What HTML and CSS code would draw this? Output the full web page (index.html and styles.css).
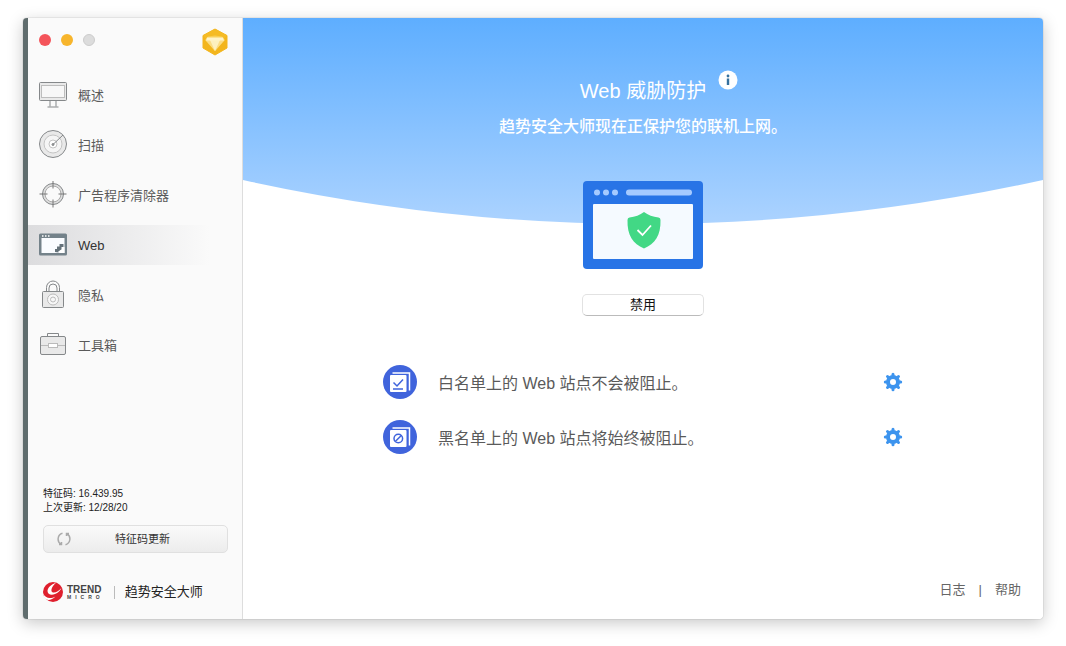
FILE: index.html
```html
<!DOCTYPE html>
<html lang="zh-CN">
<head>
<meta charset="utf-8">
<title>趋势安全大师</title>
<link rel="stylesheet" href="styles.css">
</head>
<body>
<div class="window">
  <aside class="sidebar">
    <header class="titlebar">
      <div class="lights">
        <button class="light light-close" aria-label="关闭"></button>
        <button class="light light-min" aria-label="最小化"></button>
        <button class="light light-zoom" aria-label="缩放" disabled></button>
      </div>
      <svg class="gem" viewBox="0 0 26 28" aria-hidden="true">
        <path d="M13 1 25 7.500V20L13 27 1 20V7.500Z" fill="#f3b51c" stroke="#f3b51c" stroke-linejoin="round"/>
        <path d="M13 1 25 7.500 22 11 13 8 4 11 1 7.500Z" fill="#f5bb25"/>
        <path d="M6 8.500 13 7.500l7 1L23 12 13 23 3 12Z" fill="#f9cf55"/>
        <path d="M3.500 12h19L13 23Z" fill="#fbdd85"/>
        <path d="M8 12h10l-5 11Z" fill="#fdf0bf"/>
        <path d="M4 12.500h18l-1-3H5Z" fill="#fff3c8"/>
      </svg>
    </header>

    <nav class="menu">
      <a class="item" href="#overview">
        <svg class="icon" viewBox="0 0 28 28" fill="none" stroke="#85888a" aria-hidden="true">
          <rect x=".5" y="1.500" width="27" height="18" rx="1" fill="#e9e9e9"/>
          <rect x="2.500" y="4.500" width="23" height="12" fill="#f7f7f7" stroke="#bdbdbd"/>
          <path d="M11 20v5.500M17 20v5.500M8.500 26h11"/>
        </svg>
        <span>概述</span>
      </a>
      <a class="item" href="#scan">
        <svg class="icon" viewBox="0 0 28 28" fill="none" stroke="#85888a" aria-hidden="true">
          <circle cx="14" cy="13" r="13.500" fill="#e9e9e9"/>
          <circle cx="14" cy="13" r="9" fill="#f5f5f5" stroke="#c4c4c4"/>
          <circle cx="14" cy="13" r="4" fill="#fff" stroke="#c4c4c4"/>
          <circle cx="14" cy="13.500" r="1" fill="#999"/>
          <path d="M14 13.500 24 4"/>
        </svg>
        <span>扫描</span>
      </a>
      <a class="item" href="#adware">
        <svg class="icon" viewBox="0 0 28 28" fill="none" stroke="#85888a" aria-hidden="true">
          <circle cx="14" cy="13" r="10.500" fill="#dedede"/>
          <circle cx="14" cy="13" r="8" fill="#fafafa" stroke="#aaa"/>
          <path d="M14 0v7.500M14 18.500v8M.5 13h8M19.500 13h8" stroke="#777"/>
        </svg>
        <span>广告程序清除器</span>
      </a>
      <a class="item item-active" href="#web" aria-current="page">
        <svg class="icon" viewBox="0 0 28 28" fill="none" aria-hidden="true">
          <rect x="0" y="2.500" width="28" height="22" rx="1.500" fill="#74828a"/>
          <rect x="2.500" y="7" width="23" height="15" fill="#fafcff"/>
          <path d="M3 5h1.500M6 5h1.500M9 5h1.500" stroke="#fff" stroke-width="1.500"/>
          <path d="M16 21v-3h2v-2.500h2.500V13h4v4l-3 3h-2v1.500Z" fill="#65727a"/>
          <path d="M20.500 22v-2.500l2-1V16h3v6Z" fill="#fff"/>
        </svg>
        <span>Web</span>
      </a>
      <a class="item" href="#privacy">
        <svg class="icon" viewBox="0 0 28 28" fill="none" stroke="#85888a" aria-hidden="true">
          <path d="M7.500 10V6.500a6.500 6.500 0 0 1 13 0V10M10 10V7a4 4 0 0 1 8 0v3"/>
          <rect x="3.500" y="10.500" width="21" height="16" rx="1" fill="#e9e9e9"/>
          <circle cx="14" cy="18.500" r="5.500" stroke="#bbb" fill="#f7f7f7"/>
          <circle cx="14" cy="18.500" r="2.500" stroke="#bbb"/>
        </svg>
        <span>隐私</span>
      </a>
      <a class="item" href="#toolbox">
        <svg class="icon" viewBox="0 0 28 28" fill="none" stroke="#85888a" aria-hidden="true">
          <path d="M8.500 5.500v-3h11v3"/>
          <rect x="1.500" y="5.500" width="25" height="18" rx="1.500" fill="#e9e9e9"/>
          <path d="M2 14.500h24" stroke="#bbb"/>
          <rect x="9.500" y="12.500" width="9" height="4" fill="#fff" stroke="#bbb"/>
        </svg>
        <span>工具箱</span>
      </a>
    </nav>

    <div class="status">
      <p>特征码: 16.439.95</p>
      <p>上次更新: 12/28/20</p>
    </div>
    <button class="update">
      <svg class="refresh" viewBox="0 0 14 14" fill="none" stroke="#aaa" stroke-width="1.500" aria-hidden="true">
        <path d="M5.500 1.300A6 6 0 0 0 4 12.200M8.500 12.700A6 6 0 0 0 10 1.800M2 12.500h2.500V10M12 1.500H9.500V4"/>
      </svg>
      <span>特征码更新</span>
    </button>

    <footer class="brand">
      <svg class="ball" viewBox="0 0 20 20" aria-hidden="true">
        <circle cx="10" cy="10" r="10" fill="#df1f2d"/>
        <path d="M13 .8C8 2.500 4.800 5.500 4.500 9c0 3.300 3.500 4.500 7.500 3 3-1.200 5.500-3.500 6.500-6-2.500 3-6 5-8.500 4.500C7 9.800 8.500 4.500 13 .8Z" fill="#fff"/>
        <path d="M.3 11.500c1.700 4.500 6.700 6 12.200 3-3.500 3.500-8 4.500-10.500 2C1 15 .4 13.500.3 11.500Z" fill="#fff"/>
      </svg>
      <div class="wordmark"><b>TREND</b><small>MICRO</small></div>
      <i class="rule"></i>
      <span class="product">趋势安全大师</span>
    </footer>
  </aside>

  <main class="main">
    <svg class="backdrop" viewBox="0 0 800 206" preserveAspectRatio="none" aria-hidden="true">
      <defs>
        <linearGradient id="sky" x1="0" y1="0" x2="0" y2="1">
          <stop offset="0" stop-color="#5eaeff"/>
          <stop offset="1" stop-color="#acd3ff"/>
        </linearGradient>
      </defs>
      <path d="M0 0H800V162Q400 250 0 162Z" fill="url(#sky)"/>
    </svg>

    <section class="hero">
      <h1 class="title">Web 威胁防护
        <button class="info" aria-label="信息">
          <svg viewBox="0 0 20 20" aria-hidden="true">
            <circle cx="10" cy="10" r="9.500" fill="#fff"/>
            <circle cx="10" cy="6" r="1.400" fill="#35719f"/>
            <rect x="8.800" y="8.500" width="2.400" height="6.500" fill="#35719f"/>
          </svg>
        </button>
      </h1>
      <p class="lead">趋势安全大师现在正保护您的联机上网。</p>
      <svg class="browser" viewBox="0 0 120 88" aria-hidden="true">
        <rect width="120" height="88" rx="4" fill="#2874e6"/>
        <g fill="#a5caff">
          <circle cx="14" cy="11.500" r="3"/><circle cx="23" cy="11.500" r="3"/><circle cx="32" cy="11.500" r="3"/>
          <rect x="43" y="8.500" width="66" height="6" rx="3"/>
        </g>
        <rect x="10" y="23" width="100" height="55" rx="1" fill="#f5faff"/>
        <path d="M61 31c4 3 9 5 14.500 5.500Q77.500 36.700 77.500 39C78 54 72 63 61 67.500 50 63 44 54 44.500 39q0-2.300 2-2.500C52 36 57 34 61 31Z" fill="#42d885"/>
        <path d="m54.500 49 5 5L68 44.500" fill="none" stroke="#fff" stroke-width="1.800"/>
      </svg>
      <button class="toggle">禁用</button>
    </section>

    <ul class="lists">
      <li class="row">
        <svg class="badge" viewBox="0 0 34 34" fill="none" aria-hidden="true">
          <circle cx="17" cy="17" r="17" fill="#4064dc"/>
          <path d="M9.500 8H26.500V25.500" stroke="#fff" stroke-width="1.500"/>
          <rect x="7" y="10" width="16.500" height="17" rx="1" fill="#fff"/>
          <path d="m10.500 17.500 3.500 3.500 6-6.500M10 24h10" stroke="#4064dc" stroke-width="1.500"/>
        </svg>
        <span class="text">白名单上的 Web 站点不会被阻止。</span>
        <button class="gear" aria-label="白名单设置">
          <svg viewBox="0 0 20 20" fill="none" stroke="#3d94ee" stroke-linecap="round" aria-hidden="true">
            <circle cx="10" cy="10" r="5" stroke-width="4"/>
            <path d="M10 2.300v2M10 15.700v2M2.300 10h2M15.700 10h2M4.500 4.500l1.300 1.300M14.200 14.200l1.300 1.300M4.500 15.500l1.300-1.300M14.200 5.800l1.300-1.300" stroke-width="3"/>
          </svg>
        </button>
      </li>
      <li class="row">
        <svg class="badge" viewBox="0 0 34 34" fill="none" aria-hidden="true">
          <circle cx="17" cy="17" r="17" fill="#4064dc"/>
          <path d="M9.500 8H26.500V25.500" stroke="#fff" stroke-width="1.500"/>
          <rect x="7" y="10" width="16.500" height="17" rx="1" fill="#fff"/>
          <circle cx="15.300" cy="18.500" r="4.300" stroke="#4064dc" stroke-width="1.500"/>
          <path d="m12.300 21.500 6-6" stroke="#4064dc" stroke-width="1.500"/>
        </svg>
        <span class="text">黑名单上的 Web 站点将始终被阻止。</span>
        <button class="gear" aria-label="黑名单设置">
          <svg viewBox="0 0 20 20" fill="none" stroke="#3d94ee" stroke-linecap="round" aria-hidden="true">
            <circle cx="10" cy="10" r="5" stroke-width="4"/>
            <path d="M10 2.300v2M10 15.700v2M2.300 10h2M15.700 10h2M4.500 4.500l1.300 1.300M14.200 14.200l1.300 1.300M4.500 15.500l1.300-1.300M14.200 5.800l1.300-1.300" stroke-width="3"/>
          </svg>
        </button>
      </li>
    </ul>

    <footer class="links">
      <a href="#log">日志</a><span>|</span><a href="#help">帮助</a>
    </footer>
  </main>
</div>
</body>
</html>
```
FILE: styles.css
```css
* {
  box-sizing: border-box;
  margin: 0;
  padding: 0;
}

body {
  min-height: 100vh;
  display: flex;
  padding: 18px 23px 27px;
  background: #fff;
  color: #5a5a5a;
  font: 13px/20px "Liberation Sans", "Noto Sans CJK SC", sans-serif;
}

button {
  border: 0;
  background: none;
  color: inherit;
  font: inherit;
}

a {
  color: inherit;
  text-decoration: none;
}

svg {
  display: block;
}

.window {
  flex: 1;
  display: flex;
  overflow: hidden;
  border-left: 5px solid #5f6c6d;
  border-radius: 4px;
  box-shadow: 0 0 1px rgba(0, 0, 0, 0.5), 0 4px 16px rgba(0, 0, 0, 0.22);
}

/* Sidebar */
.sidebar {
  flex: 0 0 215px;
  display: flex;
  flex-direction: column;
  border-right: 1px solid #ddd;
  background: #fafafa;
}

.titlebar {
  display: flex;
  justify-content: space-between;
  padding: 10px 14px 0 11px;
}

.lights {
  display: flex;
  gap: 10px;
  padding-top: 6px;
}

.light {
  width: 12px;
  height: 12px;
  border-radius: 50%;
}

.light-close {
  background: #f4545a;
}

.light-min {
  background: #f7b52c;
}

.light-zoom {
  border: 1px solid #ccc;
  background: #dcdcdc;
}

.gem {
  width: 26px;
  height: 28px;
}

.menu {
  display: flex;
  flex-direction: column;
  gap: 10px;
  padding-top: 19px;
}

.item {
  height: 40px;
  display: flex;
  align-items: center;
  gap: 11px;
  padding: 0 11px;
}

.item span {
  padding-top: 2px;
}

.item-active {
  background: linear-gradient(90deg, #dcdcde, #fafafa 85%);
  color: #333;
}

.icon {
  width: 28px;
  height: 28px;
  overflow: visible;
}

.status {
  margin-top: auto;
  padding: 0 15px;
  color: #222;
  font-size: 10px;
  line-height: 14px;
}

.update {
  height: 28px;
  display: grid;
  grid-template-columns: 14px 1fr;
  align-items: center;
  margin: 10px 14px 0 15px;
  padding: 0 13px;
  border: 1px solid #e0e0e0;
  border-radius: 5px;
  background: linear-gradient(#fafafa, #ececec);
  color: #333;
  font-size: 11px;
}

.refresh {
  width: 14px;
  height: 14px;
}

.brand {
  display: flex;
  align-items: center;
  padding: 29px 15px 17px;
  color: #222;
}

.ball {
  width: 20px;
  height: 20px;
}

.wordmark {
  display: grid;
  margin-left: 4px;
  color: #444;
}

.wordmark b {
  font-size: 10px;
  line-height: 10px;
}

.wordmark small {
  font-size: 5px;
  font-weight: 700;
  line-height: 5px;
  letter-spacing: 4px;
}

.rule {
  width: 1px;
  height: 13px;
  margin: 0 10px;
  background: #bbb;
}

/* Main pane */
.main {
  position: relative;
  flex: 1;
  display: flex;
  flex-direction: column;
  align-items: center;
  background: #fff;
}

.backdrop {
  position: absolute;
  top: 0;
  left: 0;
  width: 100%;
  height: 206px;
}

.hero {
  position: relative;
  display: flex;
  flex-direction: column;
  align-items: center;
  padding-top: 58px;
  color: #fff;
}

.title {
  position: relative;
  font-size: 20px;
  font-weight: 400;
  line-height: 30px;
}

.info {
  position: absolute;
  top: -6px;
  right: -32px;
  width: 20px;
  height: 20px;
}

.lead {
  padding-top: 9px;
  font-size: 16px;
  font-weight: 500;
  line-height: 24px;
}

.browser {
  width: 120px;
  height: 88px;
  margin-top: 42px;
}

.toggle {
  width: 122px;
  height: 22px;
  margin-top: 25px;
  border: 1px solid #e2e2e2;
  border-bottom-color: #bbb;
  border-radius: 5px;
  background: #fff;
  color: #111;
  line-height: 20px;
}

.lists {
  width: 65%;
  display: grid;
  gap: 21px;
  padding-top: 49px;
  list-style: none;
}

.row {
  display: flex;
  align-items: center;
  gap: 21px;
}

.badge {
  width: 34px;
  height: 34px;
}

.text {
  flex: 1;
  padding-top: 3px;
  font-size: 16px;
  line-height: 24px;
}

.gear,
.gear svg {
  width: 20px;
  height: 20px;
}

.links {
  align-self: flex-end;
  display: flex;
  gap: 13px;
  margin-top: auto;
  padding: 0 22px 19px;
  color: #666;
}
```
